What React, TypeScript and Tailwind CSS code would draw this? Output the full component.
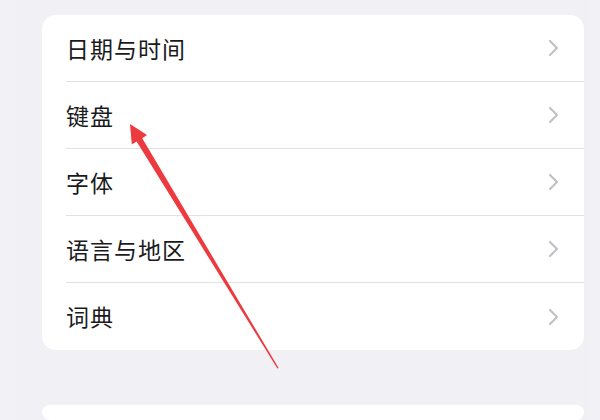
import React from "react";

const rows = ["日期与时间", "键盘", "字体", "语言与地区", "词典"];

function Chevron() {
  return (
    <svg width="11" height="18" viewBox="0 0 11 18" fill="none">
      <path d="M2 2 L9 9 L2 16" stroke="#c2c2c6" strokeWidth="2.2" strokeLinecap="round" strokeLinejoin="round" />
    </svg>
  );
}

export default function App() {
  return (
    <div
      className="relative w-[600px] h-[420px] overflow-hidden bg-[#f0f0f5] flex"
      style={{ fontFamily: '"Noto Sans CJK SC", "Noto Sans", sans-serif' }}
    >
      <div className="w-[17px] h-full bg-[#f2f2f6]" />
      <div className="flex-1 pl-[25px] pr-[6px] pt-[15px] flex flex-col">
        <div className="bg-white rounded-[14px] flex flex-col">
          {rows.map((r, i) => (
            <div key={r} className="flex items-stretch">
              <div className="w-[24px]" />
              <div
                className={
                  "flex-1 flex items-center justify-between pr-[25px] " +
                  (i < rows.length - 1 ? "h-[67px] border-b border-[#e2e2e5]" : "h-[67px]")
                }
              >
                <span className="text-[23px] leading-none text-[#1a1a1c] tracking-[1px]">{r}</span>
                <Chevron />
              </div>
            </div>
          ))}
        </div>
        <div className="mt-[55px] bg-white rounded-[14px] h-[60px]" />
      </div>
      <div className="w-[10px] h-full bg-[#f2f2f6]" />
      <svg className="absolute left-0 top-0 pointer-events-none" width="600" height="420" viewBox="0 0 600 420">
        <polygon
          points="130,124 147,135 142.2,138.2 278.6,368 277.4,368.4 136.6,141.6 131.8,144.5"
          fill="#ec3a3f"
        />
      </svg>
    </div>
  );
}
